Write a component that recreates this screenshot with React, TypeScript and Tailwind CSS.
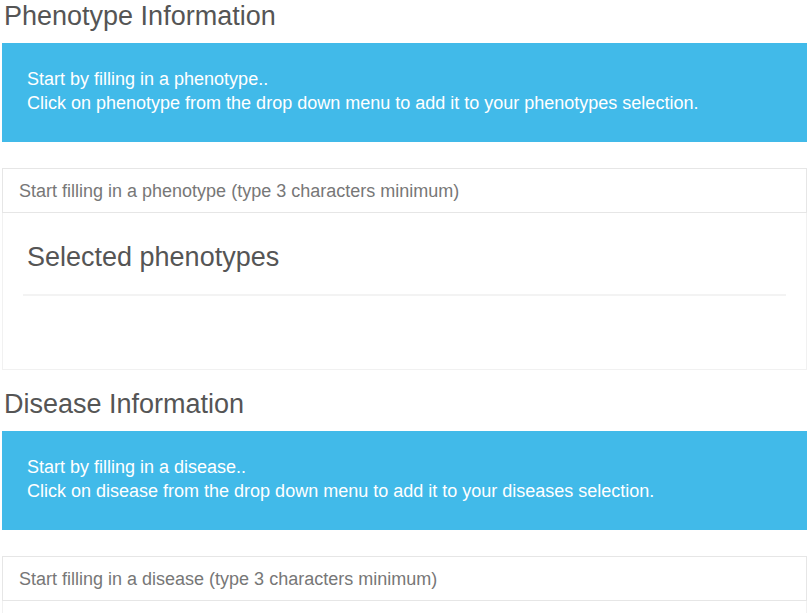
import React from "react";

function Section({
  title,
  line1,
  line2,
  placeholder,
  selected,
}: {
  title: string;
  line1: string;
  line2: string;
  placeholder: string;
  selected?: string;
}) {
  return (
    <div className="flex flex-col">
      <h3 className="h-[32px] pl-[2px] text-[27px] leading-[32px] text-[#555555]">{title}</h3>
      <div className="mt-[11px] flex h-[99px] flex-col justify-center bg-[#41bae9] px-[25px] pb-[3px] text-[18px] leading-[24px] text-white">
        <p>{line1}</p>
        <p>{line2}</p>
      </div>
      <div className="mt-[26px] flex h-[45px] items-center border border-[#e6e6e6] px-[16px] pt-[1px] text-[18px] text-[#777777]">
        {placeholder}
      </div>
      <div className="flex h-[157px] flex-col border border-t-0 border-[#f1f1f1] px-[20px]">
        {selected && (
          <>
            <h3 className="mt-[28px] h-[32px] pl-[4px] text-[27px] leading-[32px] text-[#555555]">{selected}</h3>
            <div className="mt-[21px] h-[2px] bg-[#f3f3f3]" />
          </>
        )}
      </div>
    </div>
  );
}

export default function App() {
  return (
    <div
      className="w-[812px] h-[613px] overflow-hidden bg-white pl-[2px] pr-[5px]"
      style={{ fontFamily: '"Liberation Sans", Arial, sans-serif' }}
    >
      <Section
        title="Phenotype Information"
        line1="Start by filling in a phenotype.."
        line2="Click on phenotype from the drop down menu to add it to your phenotypes selection."
        placeholder="Start filling in a phenotype (type 3 characters minimum)"
        selected="Selected phenotypes"
      />
      <div className="h-[18px]" />
      <Section
        title="Disease Information"
        line1="Start by filling in a disease.."
        line2="Click on disease from the drop down menu to add it to your diseases selection."
        placeholder="Start filling in a disease (type 3 characters minimum)"
      />
    </div>
  );
}
